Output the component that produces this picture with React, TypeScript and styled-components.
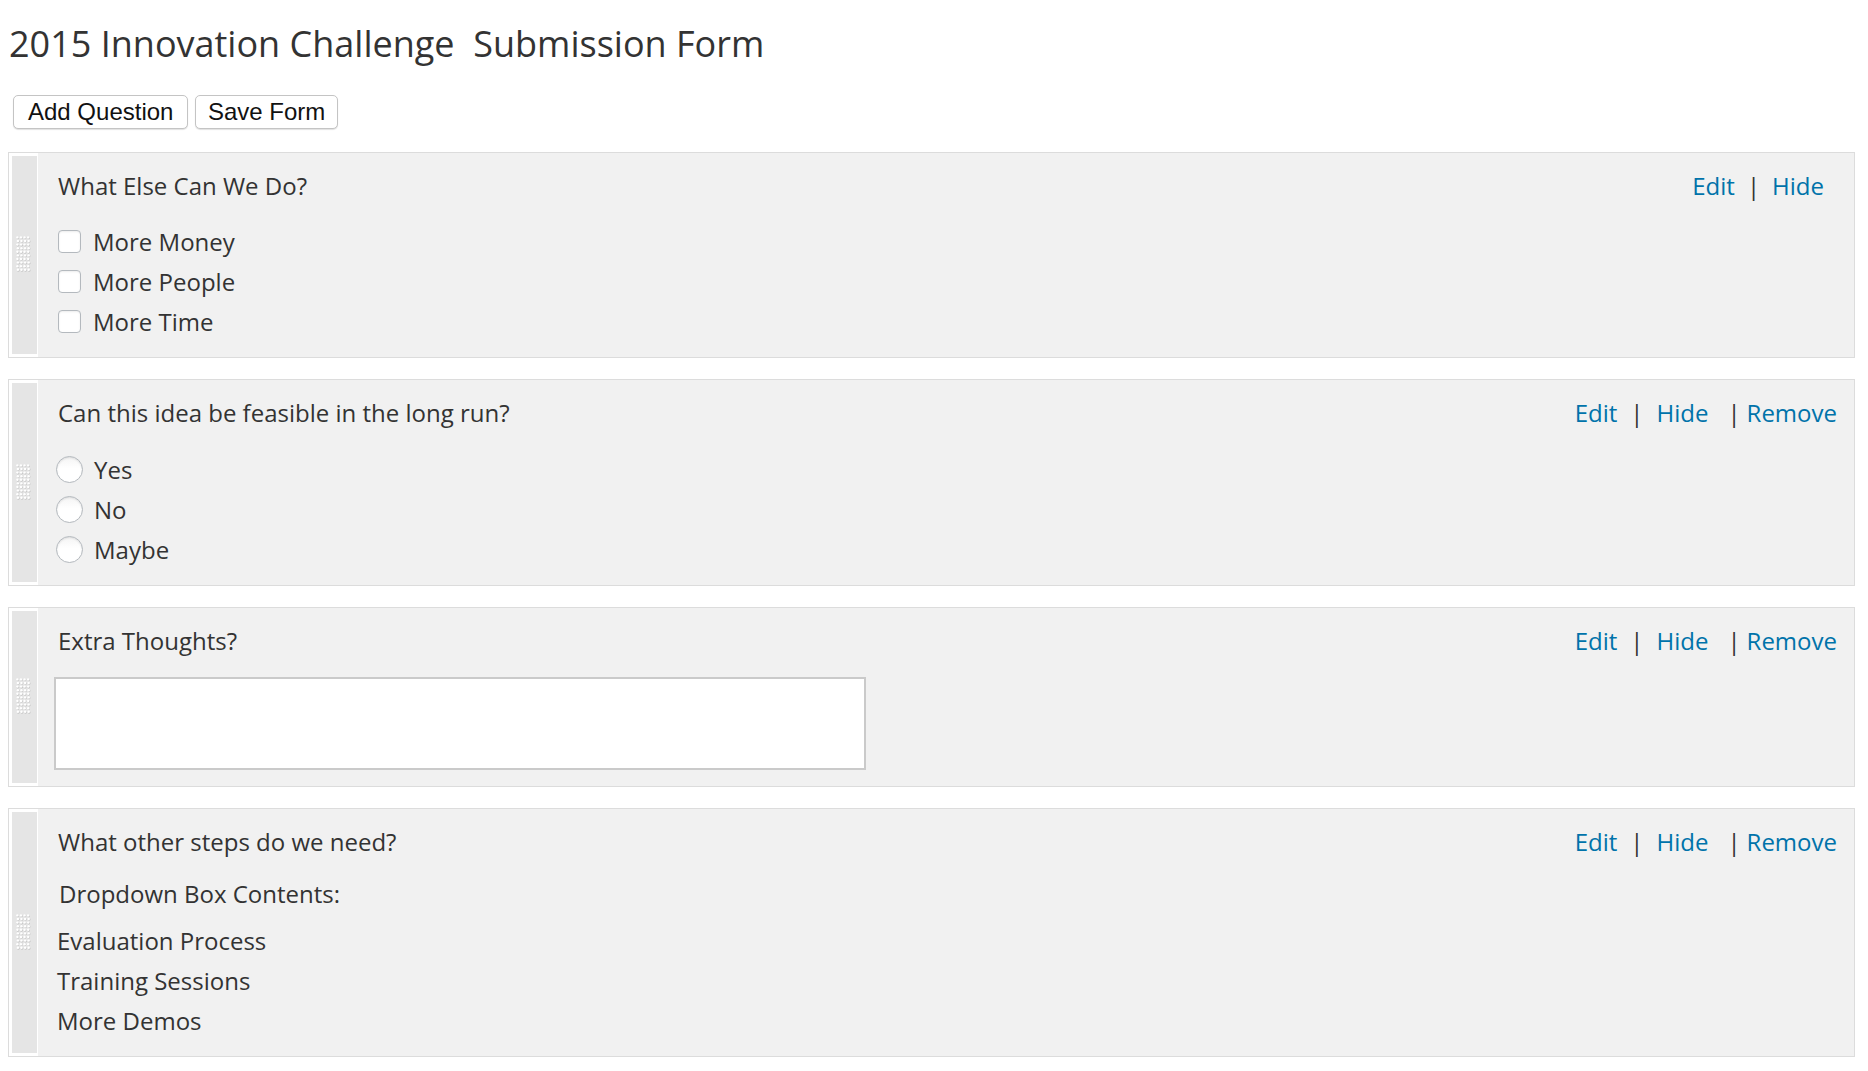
import React from "react";
import styled, { createGlobalStyle } from "styled-components";

const Global = createGlobalStyle`
  html, body { margin: 0; padding: 0; background: #fff; }
  body { font-family: "Open Sans", "Noto Sans", sans-serif; color: #333; }
  * { box-sizing: border-box; }
`;

const Page = styled.div`
  padding: 0 13px 0 8px;
`;

const Heading = styled.h1`
  margin: 0;
  padding: 22px 0 0 1px;
  font-family: "Open Sans", sans-serif;
  font-weight: 400;
  font-size: 36px;
  line-height: 43px;
  color: #333;
  white-space: pre;
`;

const Toolbar = styled.div`
  display: flex;
  gap: 7px;
  margin-top: 30px;
  padding-left: 5px;
`;

const Button = styled.button<{ $pad: number }>`
  height: 34px;
  padding: 0 ${(p) => p.$pad}px;
  background: #fff;
  border: 1px solid #c4c4c4;
  border-radius: 5px;
  box-shadow: 0 1px 1px rgba(0, 0, 0, 0.12);
  font-family: "Liberation Sans", Arial, sans-serif;
  font-size: 24px;
  color: #111;
  cursor: pointer;
`;

const List = styled.div`
  display: flex;
  flex-direction: column;
  gap: 21px;
  margin-top: 23px;
`;

const Panel = styled.section`
  display: flex;
  border: 1px solid #dcdcdc;
  background: #f1f1f1;
`;

const Handle = styled.div`
  flex-shrink: 0;
  width: 29px;
  background: #e5e5e5;
  border: 3px solid #fff;
  border-right-width: 1px;
  display: flex;
  align-items: center;
  justify-content: center;
  padding-right: 1px;
`;

const Body = styled.div`
  flex: 1;
  padding: 16px 17px 15px 20px;
`;

const Header = styled.div`
  display: flex;
  align-items: baseline;
  justify-content: space-between;
`;

const QuestionTitle = styled.div`
  font-size: 24px;
  line-height: 34px;
  color: #333;
`;

const Actions = styled.div<{ $trail?: number }>`
  display: flex;
  align-items: baseline;
  font-size: 24px;
  line-height: 34px;
  padding-right: ${(p) => p.$trail ?? 0}px;
`;

const ActionLink = styled.a`
  color: #0073aa;
  text-decoration: none;
  cursor: pointer;
`;

const Sep = styled.span<{ $ml: number; $mr: number }>`
  margin-left: ${(p) => p.$ml}px;
  margin-right: ${(p) => p.$mr}px;
  color: #333;
`;

const Options = styled.div<{ $top: number }>`
  margin-top: ${(p) => p.$top}px;
`;

const OptionRow = styled.label`
  display: flex;
  align-items: center;
  height: 40px;
  font-size: 24px;
  line-height: 40px;
  color: #333;
`;

const CheckBox = styled.span`
  width: 23px;
  height: 23px;
  margin-right: 12px;
  border: 1px solid #b4b9be;
  border-radius: 4px;
  background: #fff;
  box-shadow: inset 0 1px 2px rgba(0, 0, 0, 0.08);
  flex-shrink: 0;
`;

const RadioDot = styled.span`
  width: 27px;
  height: 27px;
  margin-left: -2px;
  margin-right: 11px;
  border: 1px solid #b4b9be;
  border-radius: 50%;
  background: linear-gradient(#f4f4f4, #ffffff 45%);
  box-shadow: inset 0 1px 2px rgba(0, 0, 0, 0.1);
  flex-shrink: 0;
`;

const TextBox = styled.textarea`
  display: block;
  width: 812px;
  height: 93px;
  margin: 19px 0 1px -4px;
  border: 2px solid #cacaca;
  background: #fff;
  resize: none;
  font-family: "Open Sans", sans-serif;
  outline: none;
`;

const DropLabel = styled.div`
  margin: 15px 0 7px 1px;
  font-size: 24px;
  line-height: 40px;
  color: #333;
`;

const DropItem = styled.div`
  margin-left: -1px;
  font-size: 24px;
  line-height: 40px;
  color: #333;
`;

const Dots = () => {
  const dots: React.ReactNode[] = [];
  for (let r = 0; r < 10; r++) {
    for (let c = 0; c < 4; c++) {
      const x = c * 3.6 + 1.4 + (r % 2 ? 0.5 : 0);
      const y = r * 3.6 + 1.4;
      dots.push(
        <g key={`${r}-${c}`}>
          <circle cx={x + 0.5} cy={y + 0.6} r={1.25} fill="#c6c6c6" />
          <circle cx={x} cy={y} r={1.2} fill="#ffffff" />
        </g>
      );
    }
  }
  return (
    <svg width="16" height="37" viewBox="0 0 16 37" aria-hidden>
      {dots}
    </svg>
  );
};

type Kind = "check" | "radio" | "text" | "drop";

interface Question {
  title: string;
  kind: Kind;
  options?: string[];
  removable: boolean;
}

const questions: Question[] = [
  { title: "What Else Can We Do?", kind: "check", options: ["More Money", "More People", "More Time"], removable: false },
  { title: "Can this idea be feasible in the long run?", kind: "radio", options: ["Yes", "No", "Maybe"], removable: true },
  { title: "Extra Thoughts?", kind: "text", removable: true },
  { title: "What other steps do we need?", kind: "drop", options: ["Evaluation Process", "Training Sessions", "More Demos"], removable: true },
];

const QuestionPanel = ({ q }: { q: Question }) => (
  <Panel>
    <Handle>
      <Dots />
    </Handle>
    <Body>
      <Header>
        <QuestionTitle>{q.title}</QuestionTitle>
        <Actions $trail={q.removable ? 0 : 13}>
          <ActionLink>Edit</ActionLink>
          <Sep $ml={q.removable ? 13 : 12} $mr={q.removable ? 13 : 12}>|</Sep>
          <ActionLink>Hide</ActionLink>
          {q.removable && (
            <>
              <Sep $ml={19} $mr={6}>|</Sep>
              <ActionLink>Remove</ActionLink>
            </>
          )}
        </Actions>
      </Header>
      {q.kind === "check" && (
        <Options $top={18.5}>
          {q.options!.map((o) => (
            <OptionRow key={o}>
              <CheckBox />
              {o}
            </OptionRow>
          ))}
        </Options>
      )}
      {q.kind === "radio" && (
        <Options $top={20}>
          {q.options!.map((o) => (
            <OptionRow key={o}>
              <RadioDot />
              {o}
            </OptionRow>
          ))}
        </Options>
      )}
      {q.kind === "text" && <TextBox />}
      {q.kind === "drop" && (
        <>
          <DropLabel>Dropdown Box Contents:</DropLabel>
          {q.options!.map((o) => (
            <DropItem key={o}>{o}</DropItem>
          ))}
        </>
      )}
    </Body>
  </Panel>
);

export default function App() {
  return (
    <Page>
      <Global />
      <Heading>{"2015 Innovation Challenge  Submission Form"}</Heading>
      <Toolbar>
        <Button $pad={14}>Add Question</Button>
        <Button $pad={11.5}>Save Form</Button>
      </Toolbar>
      <List>
        {questions.map((q) => (
          <QuestionPanel key={q.title} q={q} />
        ))}
      </List>
    </Page>
  );
}
